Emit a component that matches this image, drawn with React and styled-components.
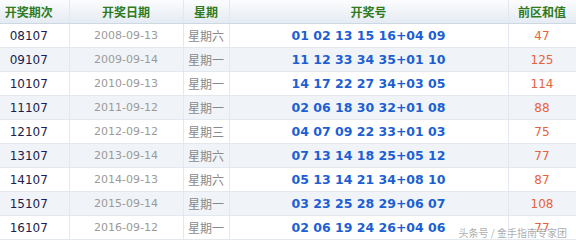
import React from "react";
import styled, { createGlobalStyle } from "styled-components";

const GlobalStyle = createGlobalStyle`
  body {
    margin: 0;
    background: #fff;
    font-family: "DejaVu Sans", "Noto Sans CJK SC", sans-serif;
  }
`;

const rows = [
  ["08107", "2008-09-13", "星期六", "01 02 13 15 16+04 09", "47"],
  ["09107", "2009-09-14", "星期一", "11 12 33 34 35+01 10", "125"],
  ["10107", "2010-09-13", "星期一", "14 17 22 27 34+03 05", "114"],
  ["11107", "2011-09-12", "星期一", "02 06 18 30 32+01 08", "88"],
  ["12107", "2012-09-12", "星期三", "04 07 09 22 33+01 03", "75"],
  ["13107", "2013-09-14", "星期六", "07 13 14 18 25+05 12", "77"],
  ["14107", "2014-09-13", "星期六", "05 13 14 21 34+08 10", "87"],
  ["15107", "2015-09-14", "星期一", "03 23 25 28 29+06 07", "108"],
  ["16107", "2016-09-12", "星期一", "02 06 19 24 26+04 06", "77"],
];

const Wrap = styled.div`
  position: relative;
  width: 576px;
  height: 244px;
  overflow: hidden;
`;

const Table = styled.table`
  width: 576px;
  table-layout: fixed;
  border-collapse: collapse;
`;

const Head = styled.th`
  height: 23px;
  padding: 0;
  padding-right: ${(p) => p.$shift || 0}px;
  background: linear-gradient(#fbfcfe, #e4ebf2);
  border-right: 1px solid #e3e8ee;
  border-bottom: 1px solid #cdd8e3;
  color: #2f7b1d;
  font: bold 12px "Noto Sans CJK SC", sans-serif;
  text-align: center;
`;

const Row = styled.tr`
  height: 24px;
  background: ${(p) => (p.$alt ? "#f0f4f8" : "#fff")};
`;

const Cell = styled.td`
  padding: 0;
  padding-right: ${(p) => p.$shift || 0}px;
  border-right: 1px solid #e3e8ee;
  border-bottom: 1px solid #e3e8ee;
  text-align: center;
  white-space: nowrap;
`;

const Issue = styled(Cell)`
  color: #1c1c4e;
  font-size: 12px;
`;

const DateCell = styled(Cell)`
  color: #9a9a9a;
  font-size: 11px;
`;

const Week = styled(Cell)`
  color: #8a8a8a;
  font: 12px "Noto Sans CJK SC", sans-serif;
`;

const Numbers = styled(Cell)`
  color: #1d5fd3;
  font-size: 12.5px;
  font-weight: bold;
`;

const Sum = styled(Cell)`
  color: #e6633e;
  font-size: 12px;
`;

const Mark = styled.div`
  position: absolute;
  right: 9px;
  bottom: 4px;
  color: rgba(150, 150, 150, 0.8);
  font: 10px "Noto Sans CJK SC", sans-serif;
  text-shadow: 0 0 2px #fff;
`;

export default function App() {
  return (
    <Wrap>
      <GlobalStyle />
      <Table>
        <colgroup>
          <col style={{ width: 69 }} />
          <col style={{ width: 114 }} />
          <col style={{ width: 46 }} />
          <col style={{ width: 279 }} />
          <col style={{ width: 68 }} />
        </colgroup>
        <thead>
          <tr>
            <Head $shift={11}>开奖期次</Head>
            <Head>开奖日期</Head>
            <Head>星期</Head>
            <Head>开奖号</Head>
            <Head>前区和值</Head>
          </tr>
        </thead>
        <tbody>
          {rows.map((r, i) => (
            <Row key={r[0]} $alt={i % 2 === 1}>
              <Issue $shift={11}>{r[0]}</Issue>
              <DateCell>{r[1]}</DateCell>
              <Week>{r[2]}</Week>
              <Numbers>{r[3]}</Numbers>
              <Sum>{r[4]}</Sum>
            </Row>
          ))}
        </tbody>
      </Table>
      <Mark>头条号 / 金手指南专家团</Mark>
    </Wrap>
  );
}
